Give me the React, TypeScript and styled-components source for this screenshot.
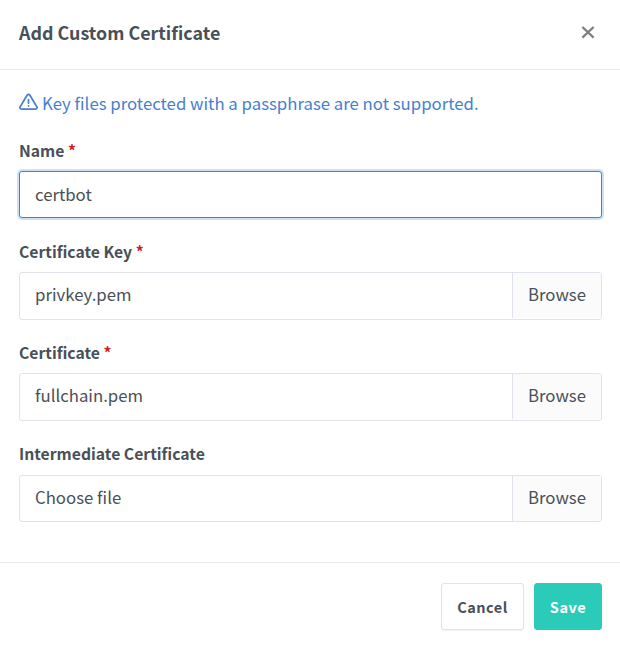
import React from "react";
import styled, { createGlobalStyle, css } from "styled-components";

const GlobalStyle = createGlobalStyle`
  *, *::before, *::after { box-sizing: border-box; }
  body {
    margin: 0;
    background: #fff;
    color: #495057;
    font-family: "Source Sans Pro", "Noto Sans CJK SC", "Noto Sans", sans-serif;
    font-size: 16.77px;
    line-height: 28px;
  }
`;

const Modal = styled.div`
  display: flex;
  flex-direction: column;
  width: 620px;
  height: 648px;
  background: #fff;
`;

const Header = styled.header`
  display: flex;
  justify-content: space-between;
  align-items: flex-start;
  height: 70px;
  padding: 18px 19px 0;
  border-bottom: 1px solid #e9ecef;
`;

const Title = styled.h5`
  margin: 0;
  font-size: 17.87px;
  font-weight: 700;
  line-height: 28px;
`;

const CloseButton = styled.button`
  display: flex;
  margin: 8px 6px 0 0;
  padding: 0;
  border: 0;
  background: none;
  color: #7f7f7f;
`;

const Body = styled.main`
  display: flex;
  flex-direction: column;
  height: 492px;
  padding: 19px 18px 0 19px;
`;

const Notice = styled.div`
  display: flex;
  gap: 4px;
  height: 28px;
  margin-bottom: 18.5px;
  color: #467fcf;

  svg {
    margin-top: 4px;
  }
`;

const Field = styled.div`
  height: 101.25px;
`;

const Label = styled.label`
  display: block;
  height: 35.4px;
  font-size: 15.74px;
  font-weight: 700;
  line-height: 30px;
`;

const Required = styled.span`
  color: #cd201f;
`;

const controlBox = css`
  width: 583px;
  height: 47.5px;
  border: 1px solid #e0e3ec;
  border-radius: 3px;
  background: #fff;
`;

const TextInput = styled.input`
  ${controlBox}
  display: block;
  padding: 0 15px 2px;
  color: #495057;
  font: inherit;
  outline: 0;

  &:focus {
    border-color: #1991eb;
    box-shadow: 0 0 0 2px rgba(70, 127, 207, 0.25);
  }
`;

const FileControl = styled.div`
  ${controlBox}
  display: flex;
  align-items: flex-start;
  overflow: hidden;
`;

const FileName = styled.span`
  flex: 1;
  padding: 7px 15px 0;
`;

const Browse = styled.span`
  width: 89px;
  height: 45px;
  padding: 7px 0 0 15px;
  border-left: 1px solid #e0e3ec;
  background: #fbfbfc;
`;

const Footer = styled.footer`
  display: flex;
  justify-content: flex-end;
  gap: 10px;
  height: 86px;
  padding: 20px 18px 18px;
  border-top: 1px solid #e9ecef;
`;

const Button = styled.button<{ $primary?: boolean }>`
  width: ${(p) => (p.$primary ? 68 : 83)}px;
  height: 47px;
  padding: 0;
  border: 1px solid ${(p) => (p.$primary ? "#2bcbba" : "#e0e3ec")};
  border-radius: 3px;
  background: ${(p) => (p.$primary ? "#2bcbba" : "#fff")};
  box-shadow: ${(p) => (p.$primary ? "none" : "0 1px 1px rgba(0, 0, 0, 0.05)")};
  color: ${(p) => (p.$primary ? "#fff" : "#495057")};
  font-family: inherit;
  font-size: 14.5px;
  font-weight: 700;
  letter-spacing: 0.5px;
`;

const files = [
  { label: "Certificate Key", value: "privkey.pem", required: true },
  { label: "Certificate", value: "fullchain.pem", required: true },
  { label: "Intermediate Certificate", value: "Choose file", required: false },
];

export default function App() {
  return (
    <>
      <GlobalStyle />
      <Modal role="dialog" aria-labelledby="modal-title">
        <Header>
          <Title id="modal-title">Add Custom Certificate</Title>
          <CloseButton aria-label="Close">
            <svg width="14" height="13" viewBox="0 0 14 13" fill="none" stroke="currentColor" strokeWidth="2.3">
              <path d="M1.4 1 12.6 11.6M12.6 1 1.4 11.6" />
            </svg>
          </CloseButton>
        </Header>
        <Body>
          <Notice>
            <svg
              width="19"
              height="18"
              viewBox="0 0 19 18"
              fill="none"
              stroke="currentColor"
              strokeWidth="1.75"
              strokeLinecap="round"
              strokeLinejoin="round"
            >
              <path d="M8.1 2.2 1.1 13.9a1.5 1.5 0 0 0 1.3 2.2h14.2a1.5 1.5 0 0 0 1.3-2.2L10.9 2.2a1.65 1.65 0 0 0-2.8 0z" />
              <path d="M9.5 6.6v3.4M9.5 12.8v.1" />
            </svg>
            <span>Key files protected with a passphrase are not supported.</span>
          </Notice>
          <Field>
            <Label htmlFor="name">
              Name <Required>*</Required>
            </Label>
            <TextInput id="name" defaultValue="certbot" autoFocus spellCheck={false} />
          </Field>
          {files.map((file) => (
            <Field key={file.label}>
              <Label>
                {file.label} {file.required && <Required>*</Required>}
              </Label>
              <FileControl>
                <FileName>{file.value}</FileName>
                <Browse>Browse</Browse>
              </FileControl>
            </Field>
          ))}
        </Body>
        <Footer>
          <Button>Cancel</Button>
          <Button $primary>Save</Button>
        </Footer>
      </Modal>
    </>
  );
}
